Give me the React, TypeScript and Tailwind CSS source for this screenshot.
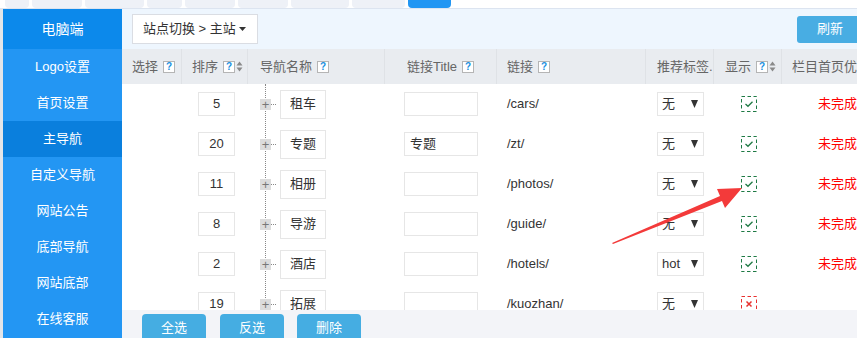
import React from "react";

const font = { fontFamily: '"Liberation Sans", "Noto Sans CJK SC", sans-serif' };

const rows = [
  { sort: "5", name: "租车", title: "", link: "/cars/", tag: "无", show: true, status: "未完成" },
  { sort: "20", name: "专题", title: "专题", link: "/zt/", tag: "无", show: true, status: "未完成" },
  { sort: "11", name: "相册", title: "", link: "/photos/", tag: "无", show: true, status: "未完成" },
  { sort: "8", name: "导游", title: "", link: "/guide/", tag: "无", show: true, status: "未完成" },
  { sort: "2", name: "酒店", title: "", link: "/hotels/", tag: "hot", show: true, status: "未完成" },
  { sort: "19", name: "拓展", title: "", link: "/kuozhan/", tag: "无", show: false, status: "" },
];

const menu = ["Logo设置", "首页设置", "主导航", "自定义导航", "网站公告", "底部导航", "网站底部", "在线客服"];

function Help() {
  return (
    <span className="inline-flex items-center justify-center w-[12px] h-[12px] border border-[#b5b5b5] bg-white text-[#1a8fe0] text-[10px] font-bold leading-none ml-[5px] shrink-0">
      ?
    </span>
  );
}

function SortIcon() {
  return (
    <svg width="7" height="11" viewBox="0 0 7 11" className="ml-[1px] shrink-0">
      <path d="M3.5 0.5 L6.5 4.5 L0.5 4.5 Z" fill="#8a8a8a" />
      <path d="M3.5 10.5 L6.5 6.5 L0.5 6.5 Z" fill="#8a8a8a" />
    </svg>
  );
}

function Caret({ w = 9, h = 6 }: { w?: number; h?: number }) {
  return (
    <svg width={w} height={h} viewBox={`0 0 ${w} ${h}`} className="shrink-0">
      <path d={`M0 0 L${w} 0 L${w / 2} ${h} Z`} fill="#333" />
    </svg>
  );
}

function Check({ ok }: { ok: boolean }) {
  const c = ok ? "#1f7a45" : "#e8312f";
  return (
    <svg width="16" height="16" viewBox="0 0 16 16">
      <rect x="0.5" y="0.5" width="15" height="15" fill="none" stroke={c} strokeDasharray="3.5 2.5" />
      {ok ? (
        <path d="M4.5 8 L7 10.3 L11.5 5.8" fill="none" stroke={c} strokeWidth="1.3" />
      ) : (
        <path d="M5.5 5.5 L10.5 10.5 M10.5 5.5 L5.5 10.5" fill="none" stroke={c} strokeWidth="1.5" />
      )}
    </svg>
  );
}

export default function App() {
  const tabs = [24, 50, 59, 35, 50, 50, 58, 53];
  return (
    <div className="relative w-[857px] h-[338px] overflow-hidden bg-white text-[13px]" style={font}>
      {/* top strip */}
      <div className="h-[9px] flex border-b border-[#dce4f0] bg-white pl-[5px]">
        {tabs.map((w, i) => (
          <div key={i} className="h-[8px] bg-[#eef1f7] rounded-b-[4px] mr-[3px]" style={{ width: w }} />
        ))}
        <div className="h-[8px] w-[43px] bg-[#2196f3] rounded-b-[4px]" />
      </div>

      <div className="flex h-[329px]">
        <div className="w-[3px] bg-[#e3e5e9]" />
        {/* sidebar */}
        <div className="w-[119px] bg-[#2396f3] flex flex-col text-white">
          <div className="h-[40px] bg-[#0c89eb] flex items-center justify-center text-[14px]">电脑端</div>
          {menu.map((m) => (
            <div
              key={m}
              className={`h-[36px] flex items-center justify-center text-[13px] ${m === "主导航" ? "bg-[#0a7fdd]" : ""}`}
            >
              {m}
            </div>
          ))}
        </div>

        {/* main */}
        <div className="flex-1 flex flex-col min-w-0">
          <div className="h-[40px] bg-[#eef6fe] flex items-center justify-between pl-[10px] shrink-0">
            <div className="w-[126px] h-[30px] bg-white border border-[#dadde3] flex items-center pl-[10px] text-[#333]">
              <span>站点切换 &gt; 主站</span>
              <span className="ml-auto mr-[11px] flex items-center">
                <Caret w={7} h={4} />
              </span>
            </div>
            <div className="w-[60px] h-[27px] bg-[#48ade3] rounded-l-[3px] flex items-center pl-[20px] text-white text-[13px]">
              刷新
            </div>
          </div>

          {/* header */}
          <div className="h-[35px] bg-[#e9ecf0] flex text-[#666] shrink-0 whitespace-nowrap">
            <div className="w-[60px] flex items-center pl-[10px] border-r border-[#dfe2e6]">选择<Help /></div>
            <div className="w-[66px] flex items-center pl-[10px] border-r border-[#dfe2e6]">排序<Help /><SortIcon /></div>
            <div className="w-[137px] flex items-center pl-[12px] border-r border-[#dfe2e6]">导航名称<Help /></div>
            <div className="w-[112px] flex items-center justify-center border-r border-[#dfe2e6]">链接Title<Help /></div>
            <div className="w-[149px] flex items-center pl-[10px] border-r border-[#dfe2e6]">链接<Help /></div>
            <div className="w-[68px] flex items-center pl-[11px] border-r border-[#dfe2e6] overflow-hidden">推荐标签.<Help /></div>
            <div className="w-[68px] flex items-center pl-[11px] border-r border-[#dfe2e6]">显示<Help /><SortIcon /></div>
            <div className="flex-1 flex items-center pl-[10px] overflow-hidden">栏目首页优化</div>
          </div>

          {/* body */}
          <div className="relative flex-1 overflow-hidden text-[#333]">
            <div className="absolute left-[143px] top-0 bottom-0 border-l border-dotted border-[#888]" />
            {rows.map((r, i) => (
              <div key={i} className="h-[40px] flex items-center whitespace-nowrap">
                <div className="w-[60px]" />
                <div className="w-[66px] pl-[16px]">
                  <div className="w-[37px] h-[24px] border border-[#e6e6e6] flex items-center justify-center bg-white">{r.sort}</div>
                </div>
                <div className="w-[137px] flex items-center pl-[12px]">
                  <div className="relative w-[11px] h-[11px] bg-[#dcdcdc] flex items-center justify-center text-[#777] text-[13px] leading-none">
                    +
                  </div>
                  <div className="w-[5px] border-t border-dotted border-[#888]" />
                  <div className="ml-[4px] w-[46px] h-[29px] border border-[#e6e6e6] bg-white flex items-center justify-center">{r.name}</div>
                </div>
                <div className="w-[112px] pl-[19px]">
                  <div className="w-[74px] h-[24px] border border-[#e6e6e6] bg-white flex items-center pl-[5px]">{r.title}</div>
                </div>
                <div className="w-[149px] pl-[10px]">{r.link}</div>
                <div className="w-[68px] pl-[11px]">
                  <div className="w-[47px] h-[24px] border border-[#e6e6e6] bg-white flex items-center pl-[4px]">
                    <span>{r.tag}</span>
                    <span className="ml-auto mr-[5px] flex items-center">
                      <Caret w={7} h={8} />
                    </span>
                  </div>
                </div>
                <div className="w-[68px] pl-[27px] flex items-center">
                  <Check ok={r.show} />
                </div>
                <div className="flex-1 pl-[36px] text-[#f00]">{r.status}</div>
              </div>
            ))}
          </div>

          {/* footer */}
          <div className="h-[28px] bg-[#f3f4f8] flex items-end pl-[20px] gap-[14px] shrink-0">
            {["全选", "反选", "删除"].map((b, i) => (
              <div
                key={b}
                className="w-[64px] h-[24px] bg-[#45ade2] rounded-t-[4px] text-white flex items-center justify-center pt-[3px]"
                style={{ marginLeft: i === 2 ? -1 : 0 }}
              >
                {b}
              </div>
            ))}
          </div>
        </div>
      </div>

      {/* red arrow overlay */}
      <svg className="absolute left-0 top-0 pointer-events-none" width="857" height="338">
        <polygon points="612,243 720,196 717,189 742,188 725,208 722,201 613,244" fill="#f33a3a" />
      </svg>
    </div>
  );
}
